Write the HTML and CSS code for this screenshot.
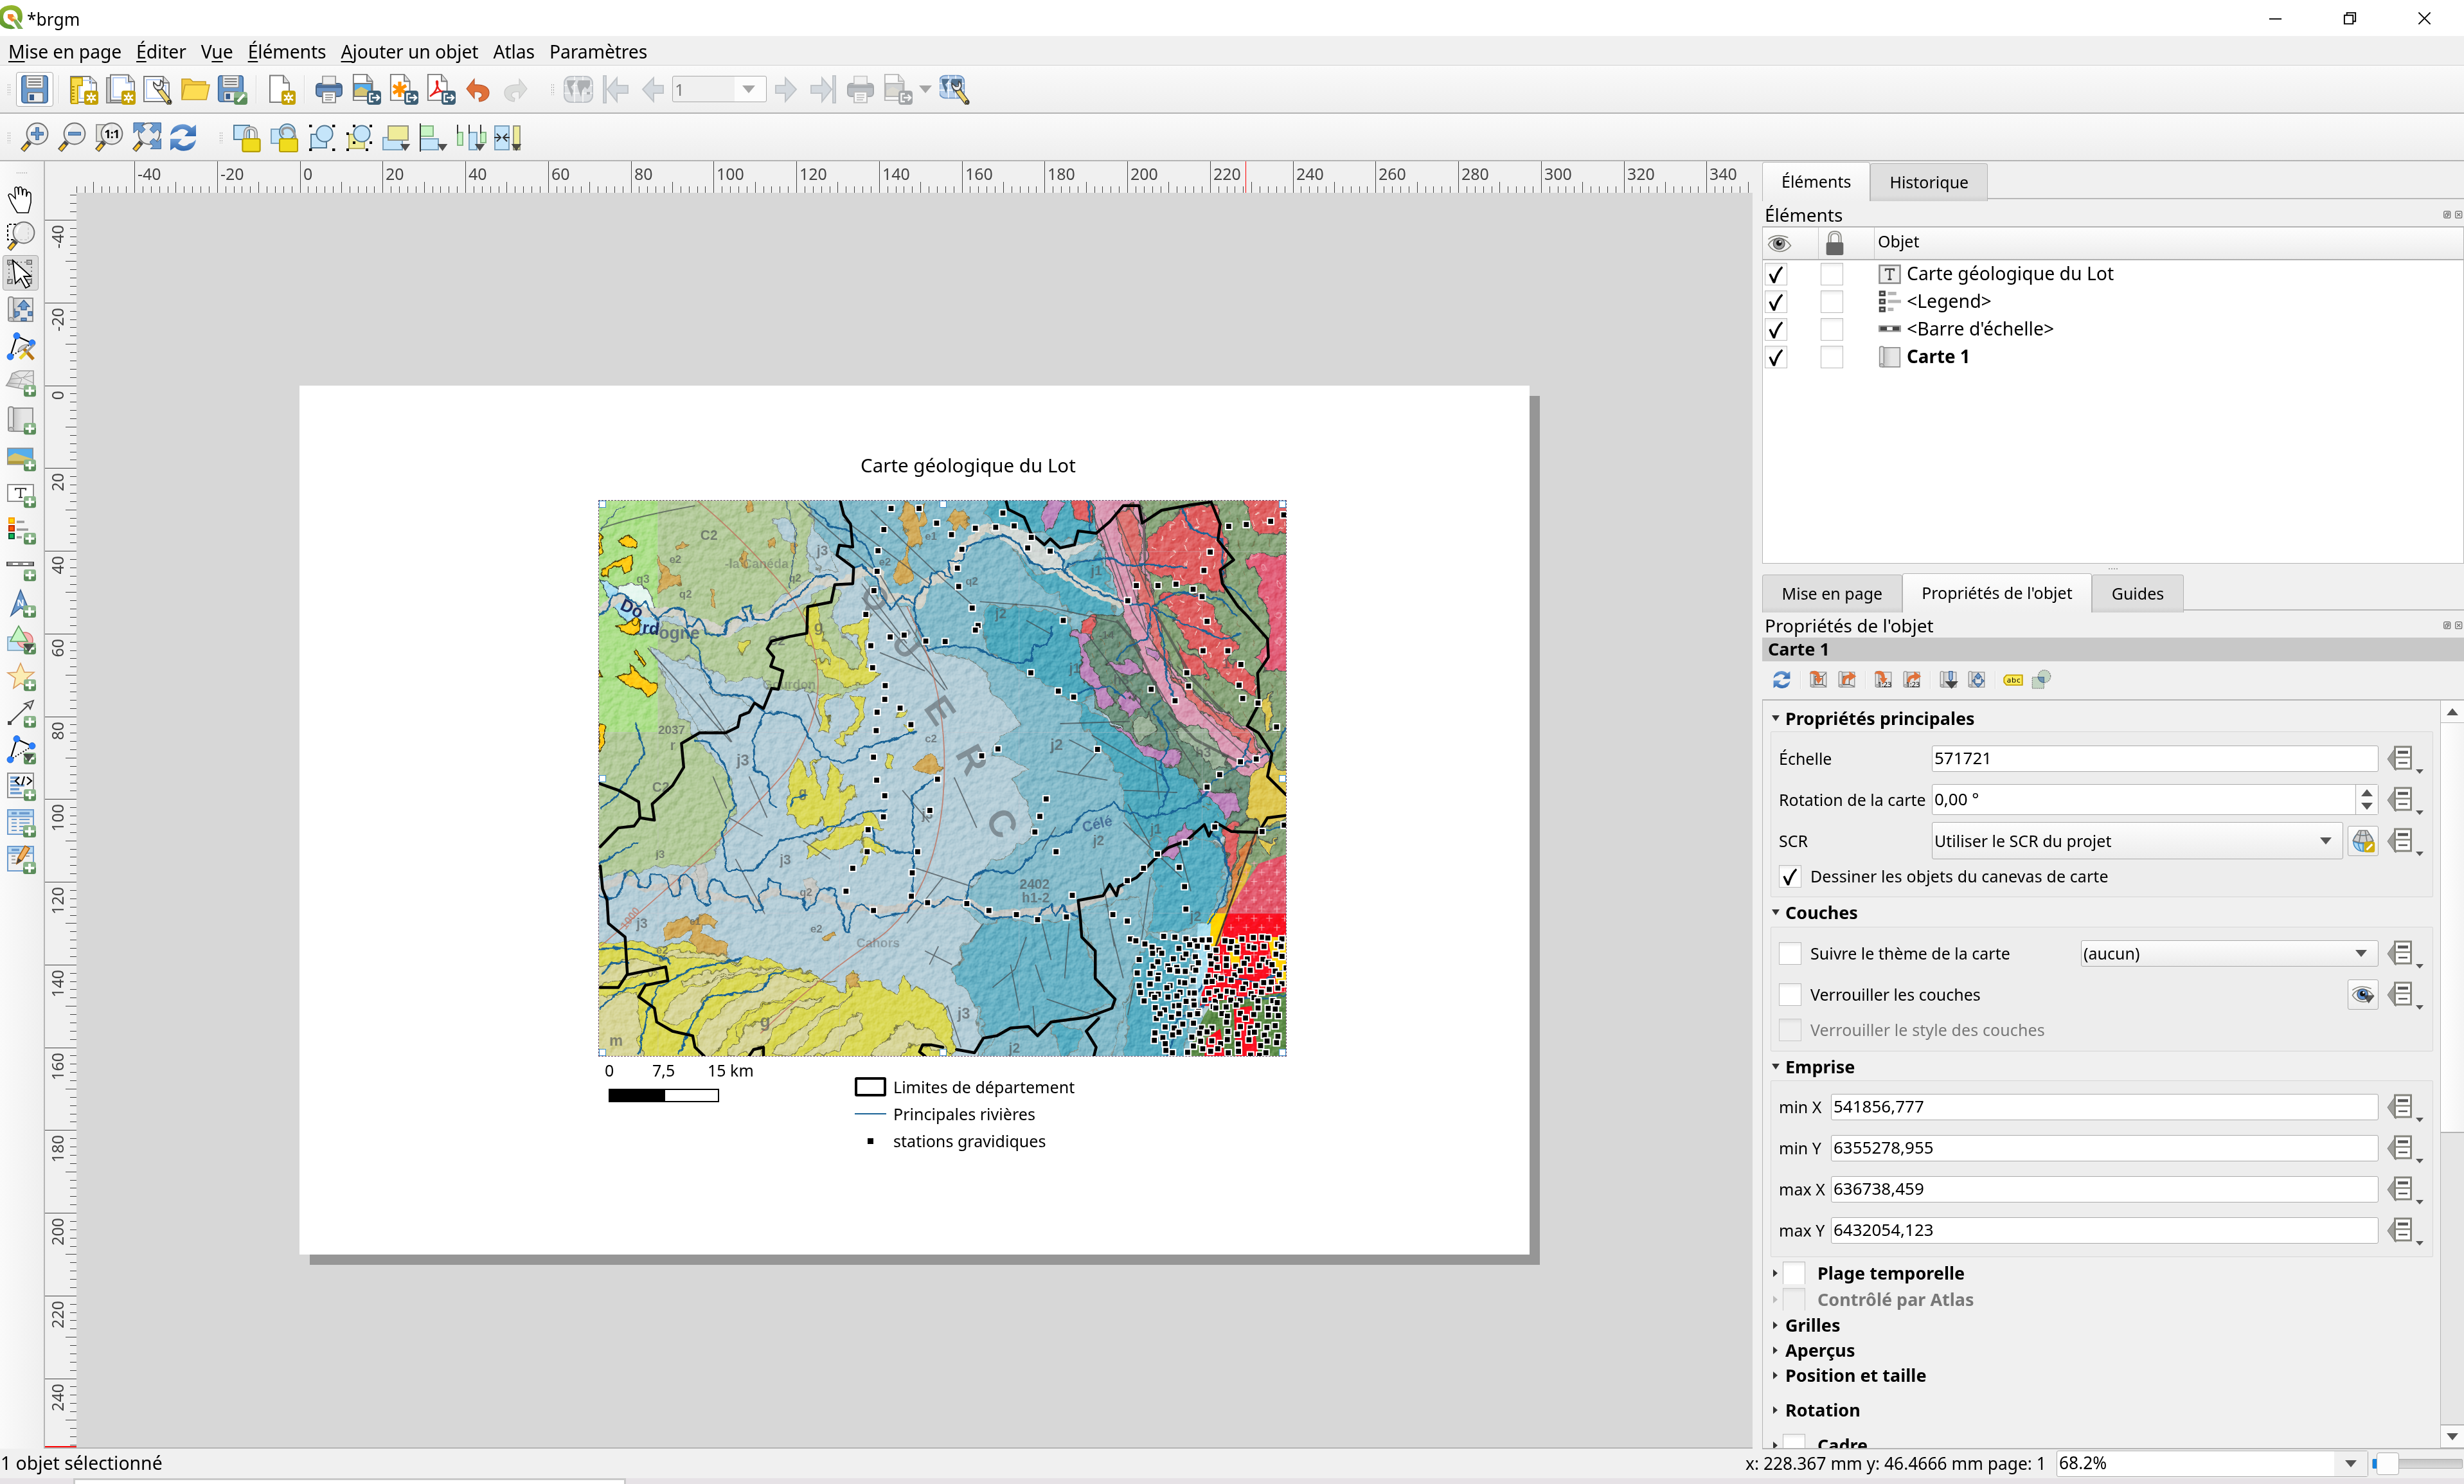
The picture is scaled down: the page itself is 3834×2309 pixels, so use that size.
FILE: index.html
```html
<!DOCTYPE html>
<html lang="fr">
<head>
<meta charset="utf-8">
<title>*brgm</title>
<link rel="stylesheet" href="styles.css">
</head>
<body>
<svg class="defs" width="0" height="0">
  <defs>
    <linearGradient id="gArrow" x1="0" y1="0" x2="0" y2="1"><stop offset="0" stop-color="#6f9fd8"/><stop offset="1" stop-color="#2d66ae"/></linearGradient>
    <linearGradient id="gRoll" x1="0" y1="0" x2="1" y2="0"><stop offset="0" stop-color="#bdbdbd"/><stop offset=".5" stop-color="#e6e6e6"/></linearGradient>
    <linearGradient id="gPlus" x1="0" y1="0" x2="0" y2="1"><stop offset=".45" stop-color="#8ab58a"/><stop offset=".46" stop-color="#5a8c5a"/></linearGradient>
    <linearGradient id="gQ" x1="0" y1="0" x2="0" y2="1"><stop offset="0" stop-color="#97b72c"/><stop offset="1" stop-color="#589632"/></linearGradient>
  </defs>
  <symbol id="plus" viewBox="0 0 9 9"><rect width="9" height="8.6" rx="1.6" fill="url(#gPlus)"/><path d="M4.500 1.200V7.400M1.200 4.300H7.800" stroke="#fff" stroke-width="1.700"/></symbol>
  <symbol id="star" viewBox="0 0 11 11"><rect width="11" height="11" rx="2" fill="#c4a000"/><path d="M5.500 1.500V9.500M2 3.500L9 7.500M9 3.500L2 7.500" stroke="#fff" stroke-width="1.300"/><circle cx="5.500" cy="5.500" r="2" fill="#fff"/><circle cx="5.500" cy="5.500" r=".9" fill="#c4a000"/></symbol>
  <symbol id="exp" viewBox="0 0 11 11"><rect width="11" height="11" rx="2.200" fill="#3d5f75"/><path d="M5 2.500H2.200V8.500H5M4 5.500H9.400M7.300 3.200L9.600 5.500L7.300 7.800" fill="none" stroke="#fff" stroke-width="1.200"/></symbol>
  <symbol id="page" viewBox="0 0 24 24"><path d="M1.500 1.500H12.500L17 7V22.500H1.500Z" fill="#fff" stroke="#797979"/><path d="M12.500 1.500V7H17" fill="#ddd" stroke="#797979"/></symbol>
  <symbol id="floppy" viewBox="0 0 24 24"><rect x="2" y="1.500" width="20" height="21" rx="2" fill="#6c9bce" stroke="#3f6a9c"/><path d="M5.500 1.500H18.500V10Q18.500 11 17.500 11H6.500Q5.500 11 5.500 10Z" fill="#eee" stroke="#888" stroke-width=".7"/><path d="M7 4H17M7 6.300H17M7 8.600H17" stroke="#555" stroke-width=".8"/><rect x="6.500" y="14.500" width="12" height="7.500" rx="1" fill="#ededed" stroke="#777" stroke-width=".7"/><rect x="8" y="16" width="3.500" height="4.500" fill="#34598a"/></symbol>
  <symbol id="glass" viewBox="0 0 24 24"><path d="M8.500 15.500L3 22" stroke="#4a4a4a" stroke-width="4"/><path d="M7 17.500L3.400 21.600" stroke="#fcc32a" stroke-width="2.200"/><circle cx="14.500" cy="9" r="8.200" fill="#eaeaea" fill-opacity=".9" stroke="#707070"/><path d="M8.500 9Q8.500 4 13 2.800Q10 6 9.500 10Z" fill="#fff"/></symbol>
  <symbol id="refresh" viewBox="0 0 24 24"><path d="M2 10.500Q3 2 11.500 1.600Q16 1.600 18.500 4.500L22 2V11H13L16 7.500Q11 3.500 7.500 7.200Q4 8 2 10.500Z" fill="url(#gArrow)"/><path d="M22 13.500Q21 22 12.500 22.400Q8 22.400 5.500 19.500L2 22V13H11L8 16.500Q13 20.500 16.500 16.800Q20 16 22 13.500Z" fill="url(#gArrow)"/></symbol>
  <symbol id="roll" viewBox="0 0 24 24"><path d="M5.500 3H21.500V21H5Z" fill="url(#gRoll)" stroke="#8f8f8f"/><path d="M2.500 20.500V3.500Q2.500 2 4.500 2Q6.500 2 6.500 3.500V18" fill="#e4e4e4" stroke="#8f8f8f"/><path d="M2.500 20Q3 17.500 5 18Q7 18.500 6.500 21H4Q2.500 21 2.500 20Z" fill="#c6c6c6" stroke="#8f8f8f" stroke-width=".8"/></symbol>
  <symbol id="wrench" viewBox="0 0 24 24"><path d="M13 12L20.500 22" stroke="#444" stroke-width="4.600" stroke-linecap="round"/><path d="M14 13.500L20.500 22" stroke="#edd36c" stroke-width="3.200" stroke-linecap="round"/><path d="M8.500 6.500Q8 10 10.500 12Q13 13 14.500 12L16 9.500Q16.500 6.500 14 5L13.500 9L11.500 9.200Z" fill="#eee" stroke="#444" stroke-width=".9"/><circle cx="20.600" cy="21.800" r="1" fill="#fff" stroke="#222"/></symbol>
  <symbol id="down" viewBox="0 0 10 7"><path d="M0 0H10L5 7Z" fill="#333" fill-opacity=".85"/></symbol>
  <symbol id="printer" viewBox="0 0 24 24"><rect x="7" y="2" width="10" height="8" fill="#eee" stroke="#888"/><rect x="2" y="7.500" width="20" height="10" rx="2.500" fill="#6c93c4" stroke="#44607f"/><path d="M2.500 8.500H21.500V11H2.500Z" fill="#4a6c97"/><rect x="7" y="1.800" width="10" height="6.500" fill="#eee" stroke="#999" stroke-width=".8"/><rect x="7" y="14" width="10" height="8.300" fill="#fff" stroke="#888"/><path d="M9 16.300H15M9 18.300H15M9 20.200H14" stroke="#888" stroke-width=".8"/></symbol>
  <symbol id="nodes" viewBox="0 0 24 24"><path d="M4 20L9 4L21 9.500" fill="none" stroke="#000" stroke-width="1.100"/><path d="M4 20L21 9.500" stroke="#000" stroke-dasharray="1 1.300"/><g fill="#2a7fff" stroke="#1f5fc0" stroke-width=".4"><circle cx="9" cy="3.800" r="2.500"/><circle cx="21" cy="9.300" r="2.500"/><circle cx="4" cy="20" r="2.500"/></g></symbol>
  <symbol id="world" viewBox="0 0 24 24"><rect x="1" y="2" width="22" height="20" rx="5" fill="#b8d0ec" stroke="#6c94c4"/><path d="M1 9H23M1 15H23M9 2V22M15.500 2V22" stroke="#fff" stroke-width=".8"/><path d="M3 5H10L7.500 9L6 10L8 13L7 18L5 13L3.500 9ZM12 5H21V9L19 12L17 10L15 13L14 18L12 12L11 8ZM18.500 14H21V16H18.500Z" fill="#51718f"/></symbol>
  <symbol id="locky" viewBox="0 0 14 20"><path d="M2.500 10V6Q2.500 1.500 6.500 1.500Q10.500 1.500 10.500 6V10" fill="none" stroke="#8a8a8a" stroke-width="2.600"/><path d="M2.500 10V6Q2.500 1.500 6.500 1.500Q10.500 1.500 10.500 6V10" fill="none" stroke="#ddd" stroke-width="1.200"/><rect x=".5" y="9.500" width="13" height="9.500" rx="1.200" fill="#f0dc1e" stroke="#b39b00"/></symbol>
  <symbol id="imgpic" viewBox="0 0 20 13"><rect x=".4" y=".4" width="19.200" height="12.200" fill="#55aeee" stroke="#8e8e8e" stroke-width=".9"/><path d="M.8 7L6 4L19.200 8.500V12.200H.8Z" fill="#d6c573"/><path d="M.8 10H19.200V12.200H.8Z" fill="#b09a3d"/></symbol>
  <symbol id="check" viewBox="0 0 24 24"><path d="M4.500 12L6.500 11L10 17.500Q13 8 18.500 3L20 4.500Q14 11 11.300 21.500H9Z" fill="#000"/></symbol>
  <symbol id="eye" viewBox="0 0 24 24"><path d="M1.500 13Q5 7 12 7Q18 7.500 22.500 14Q18 19.500 12 19.500Q5 19 1.500 13Z" fill="#f2f2f2" stroke="#83837b"/><path d="M1.500 8Q9 2 20 6.500" fill="none" stroke="#83837b"/><circle cx="11.500" cy="12" r="5.300" class="iris" stroke="#555" stroke-width=".8"/><circle cx="11.500" cy="11.500" r="2.600" fill="#111"/><circle cx="12.500" cy="10.300" r="1" fill="#fff"/></symbol>
  <symbol id="dd" viewBox="0 0 52 48"><path d="M15 5L2 23L15 41Z" fill="#a0a09c" stroke="#777"/><rect x="13.500" y="4" width="25" height="34" fill="#fdfdfd" stroke="#84847c" stroke-width="3"/><path d="M13 20.500H39" stroke="#84847c" stroke-width="2.500"/><path d="M18 12.500H34" stroke="#555" stroke-width="4.500"/><path d="M19 29H33" stroke="#555" stroke-width="2.500"/><path d="M46 39H58L52 46Z" fill="#555"/></symbol>
  <symbol id="dock" viewBox="0 0 32 12"><g fill="none" stroke="#666" stroke-width="1.200"><rect x=".7" y=".7" width="10" height="10.500" rx="2"/><rect x="18.700" y=".7" width="10" height="10.500" rx="2"/><path d="M3 5H6.500V9H3ZM5 5V3H8.500V7H7M21 3.500L26.500 8.500M26.500 3.500L21 8.500"/></g></symbol>
</svg>

<div class="window">
  <header class="titlebar">
    <svg class="logo" width="36" height="38" viewBox="0 0 36 38"><path d="M18 0Q35 1 35 18Q35 24 32 28L27 22Q28 19 27 15Q24 7 16 7.500Q5 8 5 19Q6 30 17 30.500L24 36Q20 37.500 15 37Q-3 35-3 18Q-2 1 18 0Z" fill="url(#gQ)"/><path d="M18 20L24 20L36 37H28Z" fill="#7fae58"/><path d="M12 14H20L24 22L19 26L12 20Z" fill="#f18030"/><path d="M18 20L23 17L26 23Z" fill="#ffe88c"/></svg>
    <span class="title">*brgm</span>
    <span class="winbtns">
      <svg viewBox="0 0 24 24"><path d="M2 13H22" stroke="#000" stroke-width="2"/></svg>
      <svg viewBox="0 0 24 24"><path d="M3 7H17V21H3ZM7 7V3H21V17H17" fill="none" stroke="#000" stroke-width="2"/></svg>
      <svg viewBox="0 0 24 24"><path d="M2.500 2.500L21.500 21.500M21.500 2.500L2.500 21.500" stroke="#000" stroke-width="2"/></svg>
    </span>
  </header>
  <nav class="menubar"><span><u>M</u>ise en page</span><span><u>É</u>diter</span><span>V<u>u</u>e</span><span><u>É</u>léments</span><span><u>A</u>jouter un objet</span><span>Atlas</span><span>Paramètres</span></nav>

  <div class="toolbar">
    <i class="grip"></i>
    <span class="slot framed"><svg viewBox="0 0 24 24"><use href="#floppy"/></svg></span>
    <i class="sep s1"></i>
    <span class="slot"><svg viewBox="0 0 24 24"><path d="M2 2H17L22 7V22H2Z" fill="#fff" stroke="#797979"/><path d="M17 2V7H22" fill="#ddd" stroke="#797979"/><rect x="9" y="5" width="9" height="14" fill="none" stroke="#b6cdf5"/><path d="M2.500 3H11V9H7.500V23H2.500Z" fill="#f9dc4a" stroke="#c4a000"/><path d="M3 10H5M3 12.500H5M3 15H5M3 17.500H5M3 20H5" stroke="#a68500"/><use href="#star" x="12.500" y="13" width="11" height="11"/></svg></span>
    <span class="slot"><svg viewBox="0 0 24 24"><path d="M1 3H4V22H15V22.500H1Z" fill="#ccc" stroke="#888"/><path d="M4 .8H18L22.500 6V20.500H4Z" fill="#fff" stroke="#797979"/><path d="M18 .8V6H22.500" fill="#ddd" stroke="#797979"/><path d="M6 3H16V7H20V18H6Z" fill="none" stroke="#b6cdf5"/><use href="#star" x="12.500" y="13" width="11" height="11"/></svg></span>
    <span class="slot"><svg viewBox="0 0 24 24"><path d="M1 2H16L20.500 7V21.500H1Z" fill="#fff" stroke="#797979"/><path d="M16 2V7H20.500" fill="#ddd" stroke="#797979"/><path d="M3 4.500H14V9H18V19H3Z" fill="none" stroke="#b6cdf5"/><use href="#wrench" x="0" y="0" width="24" height="24"/></svg></span>
    <span class="slot"><svg viewBox="0 0 24 24"><path d="M1.500 4H8L10 6H20V19H1.500Z" fill="#f5cb41" stroke="#c49b28" stroke-width=".8"/><path d="M4 8.500H23L20.500 20H1.500Z" fill="#fddd53" stroke="#c49b28" stroke-width=".8"/></svg></span>
    <span class="slot"><svg viewBox="0 0 24 24"><g transform="translate(-1.500 0)"><use href="#floppy" width="24" height="23"/></g><rect x="13" y="14" width="10.500" height="10" rx="2" fill="url(#gPlus)"/><path d="M16 21.500L21 16" stroke="#fff" stroke-width="2"/></svg></span>
    <i class="sep s2"></i>
    <span class="slot"><svg viewBox="0 0 24 24"><path d="M2 1.200H12.500L17 7V22H2Z" fill="#fff" stroke="#797979"/><path d="M12.500 1.200V7H17" fill="#ddd" stroke="#797979"/><use href="#star" x="11" y="13" width="11" height="11"/></svg></span>
    <i class="sep s3"></i>
    <span class="slot"><svg viewBox="0 0 24 24"><use href="#printer"/></svg></span>
    <span class="slot"><svg viewBox="0 0 24 24"><use href="#page" width="24" height="23" y="-1"/><rect x="2.500" y="7.500" width="13.500" height="10" fill="#55aeee" stroke="#777"/><path d="M3 13L8 10L15.500 14V17H3Z" fill="#d6c573"/><use href="#exp" x="12.500" y="13" width="11" height="11"/></svg></span>
    <span class="slot"><svg viewBox="0 0 24 24"><use href="#page" width="24" height="23" y="-1"/><path d="M9 6V18M4 9L14 15M14 9L4 15" stroke="#ff9000" stroke-width="2.600"/><use href="#exp" x="12.500" y="13" width="11" height="11"/></svg></span>
    <span class="slot"><svg viewBox="0 0 24 24"><use href="#page" width="24" height="23" y="-1"/><path d="M3.500 17.500Q10 13 9.500 6Q9 5 8.500 6Q9 13 15 15Q16 14 14.500 13.500Q9 13 3.500 17.500Z" fill="none" stroke="#e8201c" stroke-width="1.200"/><use href="#exp" x="12.500" y="13" width="11" height="11"/></svg></span>
    <span class="slot"><svg viewBox="0 0 24 24"><path d="M3 11.500L9 4V8.500Q20.500 8 20.500 15Q20 20.500 13 21.500L12.500 19Q16.500 17.500 14.500 15Q13 13.500 9 14V19Z" fill="#e0713a" stroke="#b4522a" stroke-width=".6"/></svg></span>
    <span class="slot off"><svg viewBox="0 0 24 24"><path d="M21 11.500L15 4V8.500Q3.500 8 3.500 15Q4 20.500 11 21.500L11.500 19Q7.500 17.500 9.500 15Q11 13.500 15 14V19Z" fill="#c6c9c6" stroke="#999" stroke-width=".6"/></svg></span>
    <i class="grip g2"></i>
    <span class="slot off gray"><svg viewBox="0 0 24 24"><use href="#world"/></svg></span>
    <span class="slot off"><svg viewBox="0 0 24 24"><path d="M2.500 1.500H4.500V22.500H2.500ZM5.500 12L13 3V9H21.500V15H13V21.500Z" fill="#b5c0cb" stroke="#8c949c"/></svg></span>
    <span class="slot off"><svg viewBox="0 0 24 24"><path d="M4 12L12.500 3V9H20V15H12.500V21.500Z" fill="#b5c0cb" stroke="#8c949c"/></svg></span>
    <span class="pagebox"><span>1</span><b></b></span>
    <span class="slot off"><svg viewBox="0 0 24 24"><path d="M20 12L11.500 3V9H4V15H11.500V21.500Z" fill="#b5c0cb" stroke="#8c949c"/></svg></span>
    <span class="slot off"><svg viewBox="0 0 24 24"><path d="M19.500 1.500H21.500V22.500H19.500ZM18.500 12L11 3V9H2.500V15H11V21.500Z" fill="#b5c0cb" stroke="#8c949c"/></svg></span>
    <span class="slot off gray"><svg viewBox="0 0 24 24"><use href="#printer"/></svg></span>
    <span class="slot off gray"><svg viewBox="0 0 24 24"><use href="#page" width="24" height="23" y="-1"/><rect x="2.500" y="7.500" width="13.500" height="10" fill="#9fb5c5" stroke="#777"/><path d="M3 13L8 10L15.500 14V17H3Z" fill="#d6c573"/><use href="#exp" x="12.500" y="13" width="11" height="11"/></svg></span>
    <svg class="menuarrow" viewBox="0 0 20 12"><path d="M0 0H20L10 12Z" fill="#a5a5a5"/></svg>
    <span class="slot"><svg viewBox="0 0 24 24"><use href="#world" x="-1" y="-.5" width="21" height="21"/><use href="#wrench" x="1.500" y="1" width="23" height="23"/></svg></span>
  </div>

  <div class="toolbar second">
    <i class="grip"></i>
    <span class="slot"><svg viewBox="0 0 24 24"><use href="#glass"/><path d="M14.500 4V14M9.500 9H19.500" stroke="#345f92" stroke-width="2.800"/><path d="M14.500 4.500V13.500M10 9H19" stroke="#6c9bce" stroke-width="1.600"/></svg></span>
    <span class="slot"><svg viewBox="0 0 24 24"><use href="#glass"/><path d="M9.500 9H19.500" stroke="#345f92" stroke-width="2.800"/><path d="M10 9H19" stroke="#6c9bce" stroke-width="1.600"/></svg></span>
    <span class="slot"><svg viewBox="0 0 24 24"><rect x="2.500" y="2" width="12" height="13" fill="#e3e3dc" stroke="#999"/><use href="#glass"/><text x="14.600" y="12.500" text-anchor="middle" class="bold" font-size="9" textLength="12">1:1</text></svg></span>
    <span class="slot"><svg viewBox="0 0 24 24"><use href="#glass"/><g fill="#6c9bce" stroke="#345f92" stroke-width=".5"><path d="M2.500 .5H11L8.700 2.700L11.500 5.700L8.500 8.700L5.500 5.700L2.500 8.500Z"/><path d="M23.700 .5H15.500L17.700 2.700L15 5.700L18 8.700L21 5.700L23.700 8.500Z"/><path d="M23.700 20.800H15.500L17.700 18.600L15 15.500L18 12.700L21 15.500L23.700 12.800Z"/></g></svg></span>
    <span class="slot"><svg viewBox="0 0 24 24"><use href="#refresh"/></svg></span>
    <i class="grip g3"></i>
    <span class="slot"><svg viewBox="0 0 24 24"><rect x="1.500" y="2.500" width="12" height="11" fill="#c5e5fa" stroke="#527d99"/><use href="#locky" x="7.500" y="3" width="15" height="21"/></svg></span>
    <span class="slot"><svg viewBox="0 0 24 24"><rect x="1.500" y="5.500" width="12" height="11" fill="#c5e5fa" stroke="#7ba0bb"/><circle cx="14" cy="7.500" r="6" fill="#c5e5fa" stroke="#527d99"/><path d="M11 10Q8.500 5 13 4.500Q19 3.500 20.500 13" fill="none" stroke="#999" stroke-width="1.800"/><rect x="8" y="13" width="14" height="10" rx="1" fill="#f0dc1e" stroke="#b39b00"/></svg></span>
    <span class="slot"><svg viewBox="0 0 24 24"><rect x="3.500" y="9.500" width="12" height="10.500" fill="#c5e5fa" stroke="#4f7590"/><circle cx="14" cy="9" r="6.300" fill="#c5e5fa" stroke="#4f7590"/><path d="M2 2h2.200v2h-2.200zM20 2h2.200v2h-2.200zM2 20.500h2.200v2h-2.200zM20 20.500h2.200v2h-2.200z"/></svg></span>
    <span class="slot"><svg viewBox="0 0 24 24"><rect x="4" y="9.500" width="12" height="11" fill="#efec97" stroke="#b5ad60"/><circle cx="14" cy="9" r="6.300" fill="#c5e5fa" stroke="#4f7590"/><path d="M7 2h2v2h-2zM20 2h2v2h-2zM2 8h2v2h-2zM20 15h2v2h-2zM7 15h2v2h-2zM2 20.500h2v2h-2zM17 20.500h2v2h-2z"/></svg></span>
    <span class="slot"><svg viewBox="0 0 24 24"><rect x="1.500" y="12" width="15" height="9.500" fill="#c5e5fa" stroke="#7ba0bb"/><rect x="5.500" y="3" width="15.500" height="11" fill="#efec9a" stroke="#929282"/><use href="#down" x="14" y="17" width="9.500" height="5.500"/></svg></span>
    <span class="slot"><svg viewBox="0 0 24 24"><rect x="1.500" y="3" width="10" height="8" fill="#c8f5c5" stroke="#84b584"/><rect x="1.500" y="13" width="14" height="8.500" fill="#c5e5fa" stroke="#7ba0bb"/><path d="M1.500 1V23" stroke="#333"/><use href="#down" x="14" y="17" width="9.500" height="5.500"/></svg></span>
    <span class="slot"><svg viewBox="0 0 24 24"><rect x="1.500" y="8" width="4" height="10" fill="#c8f5c5" stroke="#84b584"/><rect x="10.500" y="8" width="6" height="13.500" fill="#c5e5fa" stroke="#7ba0bb"/><rect x="19.500" y="8" width="4" height="8" fill="#c8f5c5" stroke="#84b584"/><path d="M1.500 2V9M10.500 2V9M19.500 2V9" stroke="#333"/><use href="#down" x="14" y="17" width="9.500" height="5.500"/></svg></span>
    <span class="slot"><svg viewBox="0 0 24 24"><rect x="1.500" y="3" width="11" height="18.500" fill="#c5e5fa" stroke="#7ba0bb"/><rect x="16" y="3" width="5" height="18.500" fill="#efec9a" stroke="#929282"/><path d="M1 12H5.500M3 9L6 12L3 15M13 12H8.500M11 9L8 12L11 15" fill="none" stroke="#333"/><use href="#down" x="13.500" y="17" width="9.500" height="5.500"/></svg></span>
  </div>

  <main class="work">
    <aside class="tools">
      <i class="grip h"></i>
      <span class="tool"><svg viewBox="0 0 24 24"><path d="M9.500 22L5 14.500L2.500 8.500Q3 6.500 5 8L8 11L7.500 3Q8.500 1 10 3L10.500 8V2.500Q12 1 13 3L13.500 8.500L14 4Q15.500 3 16.500 4.500V9.500L17.500 6Q19.500 5.500 20 7.500V14L18 22Z" fill="#fff" stroke="#000" stroke-width=".8"/></svg></span>
      <span class="tool"><svg viewBox="0 0 24 24"><path d="M12 2.500H2V14.500H18V3" fill="none" stroke="#000" stroke-dasharray="2 1.500"/><use href="#glass" width="24" height="24"/></svg></span>
      <span class="tool sel"><svg viewBox="0 0 24 24"><path d="M3 3.500H20.500V19H3Z" fill="none" stroke="#777" stroke-dasharray="1 2"/><path d="M2 2H5.500V5H2ZM17 2H20.500V5H17ZM2 17H5.500V20H2ZM17 17H20.500V20H17Z" fill="none" stroke="#777"/><path d="M6 2L20 14.500H14.500L19 22L16 23.500L12 16L8 20Z" fill="#fff" stroke="#000" stroke-width=".9"/></svg></span>
      <span class="tool"><svg viewBox="0 0 24 24"><use href="#roll"/><path d="M14.500 4.500L19 9.500H16.500V12H12.500V9.500H10ZM7.500 11V18L11 16V13.500H8M18 13.500H21V16.500H18ZM12.500 18.500H16.500V20.500H12.500Z" fill="#6c9bce" stroke="#3a5f8d" stroke-width=".7"/></svg></span>
      <span class="tool"><svg viewBox="0 0 24 24"><use href="#nodes"/><path d="M13 12L22 22" stroke="#b87412" stroke-width="2.600"/><path d="M22.500 10.500L16 17" stroke="#999" stroke-width="1.800"/><path d="M16 17L11.500 21.500" stroke="#e8d22c" stroke-width="2.600"/><path d="M10 15Q12 10.500 18 10.500Q15 14 11.500 16Z" fill="#ccc" stroke="#888" stroke-width=".6"/></svg></span>
      <span class="tool"><svg viewBox="0 0 24 24"><path d="M5.500 4.500L11 2.500H22V16L16 17L.8 14Q4 10 5.500 4.500Z" fill="url(#gRoll)" stroke="#999" stroke-width=".8"/><path d="M4 9L12 8L22 6M7 4.500L13 9L10 15.500M19 3L14 8L22 12M3 12L17 13" fill="none" stroke="#999" stroke-width=".5"/><use href="#plus" x="14.500" y="13.500" width="9.500" height="9.500"/></svg></span>
      <span class="tool"><svg viewBox="0 0 24 24"><use href="#roll"/><use href="#plus" x="14.500" y="14.500" width="9.500" height="9.500"/></svg></span>
      <span class="tool"><svg viewBox="0 0 24 24"><use href="#imgpic" x="1.500" y="5" width="20.500" height="14"/><use href="#plus" x="14.500" y="14.500" width="9.500" height="9.500"/></svg></span>
      <span class="tool"><svg viewBox="0 0 24 24"><rect x="2" y="5.500" width="20" height="13" fill="#fff" stroke="#8e8e8e"/><path d="M8 10V8.500H16V10M12 8.500V15.500M10.500 15.500H13.500" fill="none" stroke="#444" stroke-width="1.100"/><use href="#plus" x="14.500" y="14.500" width="9.500" height="9.500"/></svg></span>
      <span class="tool"><svg viewBox="0 0 24 24"><path d="M3 3H7V7H3Z" fill="#ffd400" stroke="#f79a00"/><path d="M3 9H7V13H3Z" fill="#ff5a00" stroke="#bb2a00"/><path d="M3 15H7V19H3Z" fill="#13b858" stroke="#055033"/><path d="M9 6H15M9 12H18M9 18H13" stroke="#999" stroke-width="1.700"/><use href="#plus" x="14.500" y="14.500" width="9.500" height="9.500"/></svg></span>
      <span class="tool"><svg viewBox="0 0 24 24"><rect x="1" y="8.500" width="21.500" height="3.500" fill="#444"/><path d="M2 10.200H21.500" stroke="#fff" stroke-width="1.800"/><path d="M2 10.200H6M10 10.200H14M18 10.200H21.500" stroke="#999" stroke-width="1.800"/><use href="#plus" x="14.500" y="14.500" width="9.500" height="9.500"/></svg></span>
      <span class="tool"><svg viewBox="0 0 24 24"><path d="M12 2L19.500 20L12 16L4.500 22Z" fill="#6c9bce" stroke="#3a5f8d" stroke-width=".8"/><text x="12" y="14.500" text-anchor="middle" class="bold" font-size="7" fill="#fff">N</text><use href="#plus" x="14" y="14" width="10" height="10"/></svg></span>
      <span class="tool"><svg viewBox="0 0 24 24"><rect x="2" y="10" width="14" height="10.500" fill="#c5e5fa" stroke="#7ba0bb" stroke-width=".8"/><circle cx="15.500" cy="12.500" r="6" fill="#f9b5b5" stroke="#d77070" stroke-width=".8"/><path d="M10.500 1.500L17.500 13.500H4Z" fill="#c5f7c5" stroke="#5d9a5d" stroke-width=".8"/><use href="#plus" x="14.500" y="14.500" width="9.500" height="9.500"/><use href="#down" x="13.500" y="15.500" width="9.500" height="6"/></svg></span>
      <span class="tool"><svg viewBox="0 0 24 24"><path d="M12 2L15 9L22.500 9L17 13.500L19 21L12 17.500L6.500 21.500L8 13.500L2 9.500L9 9Z" fill="#fbedb4" stroke="#d99a5e" stroke-width=".8"/><use href="#plus" x="14.500" y="14.500" width="9.500" height="9.500"/></svg></span>
      <span class="tool"><svg viewBox="0 0 24 24"><path d="M3.500 20L18 6" stroke="#444"/><path d="M2 18.500H5V21.500H2Z" fill="#444"/><path d="M15 5L22 2.500L19.500 9L18 6Z" fill="#ddd" stroke="#444" stroke-width=".9"/><use href="#plus" x="14.500" y="14.500" width="9.500" height="9.500"/></svg></span>
      <span class="tool"><svg viewBox="0 0 24 24"><use href="#nodes"/><use href="#plus" x="14.500" y="14.500" width="9.500" height="9.500"/><use href="#down" x="13.500" y="15.500" width="9.500" height="6"/></svg></span>
      <span class="tool"><svg viewBox="0 0 24 24"><rect x="2" y="2" width="20" height="19" fill="#f5f5f5" stroke="#8e8e8e"/><path d="M4 5.500H11M4 8.500H8M4 11.500H15M4 14.500H11M4 17.500H13" stroke="#6c9bce" stroke-width="1.700"/><path d="M11 5L8 8L11 11M17 5L20.500 8L17 11M15 4.500L13 11.500" fill="none" stroke="#000" stroke-width="1.100"/><use href="#plus" x="14.500" y="14.500" width="9.500" height="9.500"/></svg></span>
      <span class="tool"><svg viewBox="0 0 24 24"><rect x="2" y="2" width="20" height="19" fill="#f0f0f0" stroke="#6c9bce"/><path d="M2.500 2.500H21.500V7H2.500Z" fill="#b9d9f2"/><path d="M2 7.200H22" stroke="#6c9bce"/><path d="M5 4.700H9M11 4.700H19" stroke="#6c9bce" stroke-width="1.800"/><path d="M5 9.500H9M11 9.500H19M5 12.300H9M11 12.300H19M5 15H9M11 15H15M5 18H9M11 18H15" stroke="#6c9bce"/><use href="#plus" x="14" y="14" width="10" height="10"/></svg></span>
      <span class="tool"><svg viewBox="0 0 24 24"><rect x="2" y="2" width="20" height="19" fill="#f0f0f0" stroke="#6c9bce"/><path d="M2.500 2.500H21.500V7H2.500Z" fill="#b9d9f2"/><path d="M2 7.200H22" stroke="#6c9bce"/><path d="M5 4.700H11" stroke="#6c9bce" stroke-width="1.800"/><path d="M5 9.500H8M5 12.300H8M5 15H9M16 9.500H19" stroke="#999"/><path d="M9 15.500L10 11L15.500 1.500L19 3.500L13 13Z" fill="#f3b15f" stroke="#b1620b" stroke-width=".8"/><path d="M9 15.500L10 11L13 13Z" fill="#444"/><use href="#plus" x="14" y="14" width="10" height="10"/></svg></span>
    </aside>

    <section class="layout">
      <svg class="hruler" id="hruler" width="2657" height="49"></svg>
      <div class="below">
        <svg class="vruler" id="vruler" width="49" height="1952"></svg>
        <div class="canvas">
          <div class="sheet">
            <div class="maptitle">Carte géologique du Lot</div>
            <div class="mapitem">
<svg class="map" viewBox="17 139 1524 1210" preserveAspectRatio="none">
  <defs>
    <filter id="relief" filterUnits="userSpaceOnUse" x="17" y="139" width="1524" height="1210" color-interpolation-filters="sRGB"><feTurbulence type="fractalNoise" baseFrequency=".055" numOctaves="3" seed="8" result="n"/><feColorMatrix in="n" type="matrix" values="0 0 0 0 0 0 0 0 0 0 0 0 0 0 0 1 0 0 0 0"/><feDiffuseLighting surfaceScale="3.500" diffuseConstant="1" lighting-color="#fff"><feDistantLight azimuth="225" elevation="30"/></feDiffuseLighting></filter>
    <filter id="ragged" filterUnits="userSpaceOnUse" x="-20" y="100" width="1600" height="1290" color-interpolation-filters="sRGB"><feTurbulence type="fractalNoise" baseFrequency=".03" numOctaves="3" seed="3"/><feDisplacementMap in="SourceGraphic" scale="32" xChannelSelector="R" yChannelSelector="G"/></filter>
    <filter id="winding" filterUnits="userSpaceOnUse" x="-20" y="100" width="1600" height="1290" color-interpolation-filters="sRGB"><feTurbulence type="fractalNoise" baseFrequency=".07" numOctaves="2" seed="5"/><feDisplacementMap in="SourceGraphic" scale="11" xChannelSelector="R" yChannelSelector="G"/></filter>
    <pattern id="pp" width="62" height="58" patternUnits="userSpaceOnUse"><path d="M8 8l9 9M40 30l9-10M20 42v12M50 50h10M46 8l5 8" stroke="#f3d6cf" stroke-width="2.500"/></pattern>
    <pattern id="pc" width="54" height="62" patternUnits="userSpaceOnUse"><circle cx="14" cy="14" r="5.500" fill="none" stroke="#f2a9b6" stroke-width="2"/><circle cx="40" cy="44" r="5.500" fill="none" stroke="#f2a9b6" stroke-width="2"/></pattern>
    <pattern id="pd" width="34" height="44" patternUnits="userSpaceOnUse"><path d="M6 6l4 12M22 26l4 12" stroke="#7d6a45" stroke-width="1.500"/></pattern>
    <pattern id="px" width="34" height="40" patternUnits="userSpaceOnUse"><path d="M8 2v14M1 9h14M25 22v14M18 29h14" stroke="#f7b3bd" stroke-width="1.600"/></pattern>
  </defs>
  <rect x="17" y="139" width="1524" height="1210" fill="#b5ced8"/>
  <g stroke="#7f8a84" stroke-width="1.800" stroke-linejoin="round" filter="url(#ragged)">
    <path fill="#86bccb" d="M470 90H1140L1200 350 1140 430 1130 600 1180 740 1300 860 1420 900 1400 1060 1360 1130 1340 1390H850L862 1290 850 1230 800 1165 830 1110 865 1060 820 1020 835 985 880 940 940 900 985 855 965 790 940 745 970 722 890 690 905 652 948 632 930 590 885 555 880 520 840 480 760 470 720 440 700 370 640 352 600 300 560 262 500 230 490 180Z"/>
    <path fill="#54adc1" d="M880 90H1100L1130 210 1100 240 1000 210 930 200 870 170Z"/>
    <path fill="#54adc1" d="M930 250L990 300 1060 290 1130 250 1170 400 1165 420 1110 385 1055 375 1040 345 985 320Z"/>
    <path fill="#4faabe" d="M885 368L960 370 1060 392 1080 440 1095 470 1110 560 1080 580 1030 550 980 525 935 495 890 470 865 420Z"/>
    <path fill="#4faabe" d="M1080 570L1115 600 1210 660 1300 720 1400 770 1440 830 1390 880 1290 910 1225 870 1190 850 1175 740 1140 700 1085 620Z"/>
    <path fill="#57aec3" d="M1230 880L1330 870 1410 900 1405 960 1370 1060 1230 1090 1260 980Z"/>
    <path fill="#69b3c6" d="M865 1060L1085 1050 1090 1095 1118 1170 1160 1240 1090 1290 1020 1275 870 1310 862 1250 800 1165Z"/>
    <path fill="#57aec3" d="M1210 1090L1330 1100 1320 1390H1180L1190 1250Z"/>
    <path fill="#86bccb" d="M1090 1030L1210 1000 1230 1090 1200 1170 1175 1280 1130 1390H850L890 1300 1020 1275 1160 1240 1118 1170Z"/>
    <path fill="#57aec3" d="M1020 1275L1090 1290 1070 1349H1040Z"/>
    <path fill="#b4cb9b" d="M-20 90H468L490 190 488 240 475 290 500 305 440 340 400 370 260 430 235 395 150 385-20 340Z"/>
    <path fill="#b4cb9b" d="M225 420L300 430 400 395 480 360 530 318 552 350 530 390 560 430 600 470 610 540 560 550 545 570 480 550 390 550 380 520 300 535 262 505 245 480 190 490 145 460 148 400Z"/>
    <path fill="#b4cb9b" d="M120 440L205 620 250 670 300 730 318 800 285 890 240 935 130 940-20 970V430Z"/>
    <path fill="#b5ced8" d="M400 190L430 175 455 200 450 235 425 215ZM480 180L520 230 545 290 505 300 485 250Z"/>
  </g>
  <path d="M17 139H148V644H17Z" fill="#aee08c"/>
  <g filter="url(#winding)">
  <path d="M128 455L240 640 300 640 355 590 330 570 270 560 245 510 190 490Z" fill="#b5ced8" stroke="#7f8a84" stroke-width="1.500"/>
  <path d="M20 310L100 350 148 375V425L100 430 40 360Z" fill="#a9def3" stroke="#2d4a5a" stroke-width="2"/>
  <path d="M60 328Q110 305 135 350L145 400 60 350Z" fill="#e6f7f0" stroke="#556" stroke-width="1.500"/>
  <path fill="none" stroke="#d4d3c9" stroke-width="20" stroke-linejoin="round" d="M20 380L60 350 120 382 200 382 215 415 250 405 300 430 340 385 380 400 440 355 500 312 560 320 600 290 640 300 650 350 700 352 730 365 740 320 790 300 820 250 870 200 930 205 990 260 1100 330 1180 365"/>
  <path fill="#d3d9d6" stroke="#8a958f" d="M880 200Q930 180 975 215L1018 250 1130 225 1045 270 1060 290 1010 300 960 260Z"/>
  <path fill="none" stroke="#c9cac6" stroke-width="16" d="M20 985L70 960 120 985 200 975 245 950 260 1000 370 1010 400 990 470 1000 510 1000 550 1020 640 1030 700 1025 830 1010 880 1040 1060 1030 1180 985"/>
  <path fill="#c9cac6" stroke="#8a958f" d="M230 930L255 930 262 1000 240 1010ZM170 950L205 958 195 1010 170 985ZM470 965Q500 950 505 990L490 1020Z"/>
  </g>

  <g stroke="#7c7b45" stroke-width="1.800" stroke-linejoin="round" filter="url(#ragged)">
    <path fill="#dbd957" d="M-20 1115L90 1098 150 1110 210 1100 300 1135 400 1142 500 1175 560 1212 575 1168 640 1195 680 1215 685 1175 720 1200 750 1205 780 1250 805 1310 800 1390H-20Z"/>
    <g fill="#d8d69a"><path d="M-20 1170Q90 1120 160 1150L130 1170 17 1195ZM-20 1230L105 1205 110 1390H-20ZM150 1270Q220 1180 320 1165Q260 1200 220 1270L190 1290ZM235 1310Q310 1200 410 1180L540 1180Q440 1200 400 1230Q320 1250 270 1349H235ZM300 1349Q350 1260 480 1225L520 1225Q420 1260 360 1349ZM400 1349Q440 1290 580 1215Q500 1270 450 1349ZM480 1349Q520 1290 600 1260L600 1290Q560 1310 530 1349ZM620 1340L700 1275 760 1300 800 1349 720 1320 640 1370ZM150 1130Q260 1110 330 1145Q240 1130 160 1140ZM200 1180Q300 1150 480 1165Q300 1165 210 1195Z"/></g>
    <path fill="#dbd957" d="M380 1240Q430 1220 460 1235L400 1265Q350 1270 330 1310L320 1290Z"/>
    <path fill="#dbd957" d="M455 700L480 740 505 700 495 745 520 790 530 710 560 730 545 770 590 760 585 790 560 800 550 850 520 860 510 820 500 850 470 850 430 820 440 760Z"/>
    <path fill="#dbd957" d="M478 370L500 360 510 430 540 480 590 510 600 480 590 430 565 430 565 415 600 400 620 390 612 440 610 500 640 510 620 530 550 545 530 520 490 490 530 500 500 460 480 440ZM510 570L545 555 525 590 530 640 510 640ZM580 560L610 570 605 600 600 630 570 650 560 680 535 660 570 640 590 600ZM480 890L540 860 600 840 620 820 655 850 610 855 590 880 540 900 510 900 480 930ZM600 870L640 890 650 920 620 900 600 940ZM650 690L670 695 672 715 655 712ZM680 600l22-4-6 12-16 2ZM696 632l18-10 4 18-16 2Z"/>
    <path fill="#dbd957" d="M315 445L348 445 340 470 318 468Z"/>
  </g>
  <g fill="#d2ab5a" stroke="#8d7440" stroke-width="1.500" filter="url(#ragged)">
    <path d="M690 139L710 150 720 180 740 150 745 180 725 200 735 240 715 235 705 260 708 310 680 320 672 290 700 250 705 210 685 180ZM785 190L810 150 835 175 830 205 820 190 805 200ZM710 715L750 695 790 715 760 735 715 725Z"/>
    <path d="M155 1070L230 1045 285 1050 270 1065 250 1065 250 1085 305 1105 300 1130 240 1120 215 1095 215 1075 180 1090 160 1100ZM570 1175L600 1170 595 1200 575 1205ZM518 1085l20-6 6 12-20 6Z"/>
    <path d="M145 262L165 290 195 305 200 320 175 325 148 345 160 320 148 285ZM266 330l8 2 2 40-10-4ZM340 150l12-4 6 14-14 4ZM190 238l15-9 6 10-14 6ZM445 235l14 4-6 22-14-14ZM385 232l22-12 4 12-14 6ZM333 250l12 4-4 34-8-4Z"/>
  </g>
  <g fill="#ffcc14" stroke="#4b3c08" stroke-width="2.500" filter="url(#winding)">
    <path d="M60 225L85 215 103 230 98 243 80 238 60 232ZM22 290L60 270 90 258 88 290 72 298 68 280 40 288 38 305 22 300ZM54 412L75 408 90 400 110 400 108 425 80 432ZM55 520L90 515 85 495 105 515 120 530 148 538 140 562 125 565 110 548 85 545ZM97 462l24 32-3 6-24-32Z"/><path d="M17 210l6 5v40l-6 2ZM17 625l14 2-4 50-10 10ZM17 510l8 10-8 6Z"/><circle cx="99" cy="402" r="8"/>
  </g>

  <g stroke="#4f5950" stroke-width="2.200" stroke-linejoin="round" filter="url(#ragged)">
    <path fill="#6f937f" d="M1090 400L1180 380 1240 440 1300 560 1400 650 1490 750 1460 870 1400 900 1420 820 1320 740 1200 650 1120 590 1100 520Z"/>
    <path fill="#8aa67c" d="M1200 90H1590V1100L1440 1040 1400 900 1480 800 1470 680 1380 620 1290 500 1240 380Z"/>
    <path fill="url(#pd)" stroke="none" d="M1200 139H1541V1100L1440 1040 1400 900 1320 740 1150 600 1100 450 1240 380Z"/>
    <path fill="#e06263" d="M1235 220L1320 150 1385 150 1420 270 1400 300 1410 340 1370 330 1300 320 1230 290ZM1260 345L1360 340 1400 420 1440 450 1420 480 1470 520 1480 570 1430 540 1350 490 1310 420ZM1430 100H1590V200L1475 220ZM1060 90H1100L1110 180 1070 170ZM1300 450L1350 490 1370 530 1330 520ZM1400 860L1440 840 1420 960 1408 930ZM1085 395l40 0-15 45-20 0Z"/>
    <path fill="url(#pp)" stroke="none" d="M1235 220L1320 150 1385 150 1420 270 1400 300 1410 340 1370 330 1300 320 1230 290ZM1260 345L1360 340 1400 420 1440 450 1420 480 1470 520 1480 570 1430 540 1350 490 1310 420ZM1430 139H1541V200L1475 220Z"/>
    <path fill="#e2607a" d="M1450 260L1590 248V500L1500 510 1470 480 1510 440 1500 370 1470 350 1490 320Z"/>
    <path fill="url(#pc)" stroke="none" d="M1450 260L1541 248V500L1500 510 1470 480 1510 440 1500 370 1470 350 1490 320Z"/>
    <path fill="#db9bb5" d="M1095 90H1205L1225 180 1245 365 1275 480 1320 540 1470 650 1505 700 1500 790 1455 740 1330 650 1260 560 1200 440 1140 260Z"/>
    <path fill="#dd7370" d="M1160 170L1200 150 1240 340 1290 520 1480 670 1480 690 1320 570 1260 480 1215 350Z"/>
    <path fill="#bf88be" d="M1060 425L1110 430 1090 460 1120 520 1165 590 1130 585 1090 520 1085 470ZM1145 500L1200 490 1230 505 1180 515ZM1165 575L1190 550 1220 590 1190 615ZM1225 460L1260 465 1250 490ZM1150 625L1200 650 1240 680 1310 690 1290 720 1230 690ZM1350 770L1430 770 1440 810 1410 830ZM1000 160L1030 139H1050L1035 180 1010 210ZM1250 920L1320 840 1340 860 1290 920Z"/>
    <path fill="#9db39b" d="M1200 630L1240 600 1250 640 1220 660ZM1295 640L1350 620 1400 690 1420 720 1380 720Z"/>
    <path fill="#dfc852" d="M1460 740L1510 700 1590 780V820L1490 850 1450 820ZM1495 570L1505 560 1508 640 1492 640ZM1480 880l40-5-15 45Z"/>
    <path fill="#d98648" d="M1440 900L1490 850 1440 950 1385 1120 1370 1100Z"/>
  </g>
  <path fill="#e3b93c" d="M1350 1095L1405 1040 1448 925 1465 935 1400 1110Z"/>
  <path fill="#e35a6e" d="M1480 930L1541 910V1040H1410L1440 990Z"/>
  <path fill="#fb0f20" d="M1410 1038H1541V1240H1350L1365 1140 1395 1100Z"/>
  <path fill="url(#px)" d="M1440 930L1541 910V1240H1360L1395 1100Z"/>
  <path fill="#ffd500" d="M1352 1080L1378 1038H1412L1385 1112 1350 1105ZM1410 1090L1435 1095 1440 1160 1420 1150ZM1500 1090H1541V1200L1520 1190Z"/>
  <path fill="#a9dff0" d="M1345 1060H1375L1365 1190 1340 1240Z"/>
  <path fill="#5f8f4a" d="M1380 1230L1541 1210V1349H1320L1360 1260Z"/>
  <path fill="#fb0f20" d="M1425 1245L1465 1240 1480 1349H1430ZM1365 1310l30-20 10 59h-45Z"/>
  <path d="M1478 850L1385 1110" stroke="#4a3a30" stroke-width="4"/>

  <rect x="17" y="139" width="1524" height="1210" filter="url(#relief)" class="shade"/>

  <g fill="none" stroke="#43494d" stroke-width="2.600" opacity=".7">
    <path d="M20 200Q90 175 230 150M460 145L640 300 790 550M560 180L750 320M600 320L700 450M620 160L780 310 850 370M862 359L1010 370 1170 405M600 350L785 552M125 460L310 665M240 560L312 665M480 560L508 630M1040 625L1195 620M1110 650L1270 740M1033 728L1145 748M1060 660L1120 690 1080 735M1270 620L1350 740M640 470L740 510M965 400L1020 430M805 742L855 852M720 940L845 980M1000 900L1030 850M870 1060L840 1100M965 1090L940 1160 890 1200M930 1150L950 1250M1060 1060L1050 1180M1010 1225L1130 1265M1130 940L1160 1110M1240 960L1220 1100M1180 770L1300 775M1250 700L1260 790M1190 800L1240 890M1300 880L1330 990M350 740L390 830M270 740L300 810M305 830L380 870M780 960L700 1060M740 1120L800 1150M780 1250L790 1240 820 1330M320 920L385 1040M470 880L530 920M1170 230L1230 420M1130 180L1200 380 1320 560M1160 160L1240 350M1260 470L1400 620M1350 600L1480 720M1200 450L1290 600M980 1240L985 1300M690 770L750 840M1205 1190L1190 1260M770 1110l-20 40M985 1150l20 60M1110 160L1180 350M1190 150L1225 200 1230 330M1100 430L1230 600M1300 500L1450 640M1180 840L1310 960M1150 1060L1180 1180M1000 1060L1020 1140"/>
    <path stroke-width="6" stroke="#4b4f4d" d="M1225 165L1228 270M1165 400L1200 440 1260 560M1250 380L1330 520 1400 600M1280 600L1340 660 1460 720"/>
  </g>
  <g fill="none" stroke="#c0705c" stroke-width="2.500" opacity=".8"><path d="M235 139Q330 215 430 330Q500 420 503 530Q505 620 440 720Q320 860 20 1110M700 370Q800 560 780 790Q760 1000 640 1090Q500 1180 375 1300"/></g>
  <path d="M17 644H1541M148 139V1349M551 139V1349M949 139V1349M1355 250V900M17 1038H1541M949 250H1541" stroke="#c9c4cc" stroke-width="1" opacity=".6"/>
  <g fill="#505458" fill-opacity=".65" font-size="30" class="geo">
    <text x="242" y="224">C2</text><text x="135" y="774">C2</text><text x="392" y="454">C2</text><text x="148" y="648" font-size="27">2037</text><text x="175" y="682">r</text><text x="322" y="716" font-size="34">j3</text><text x="418" y="932">j3</text><text x="100" y="1070">j3</text><text x="812" y="1268" font-size="34">j3</text><text x="1018" y="682" font-size="34">j2</text><text x="1113" y="890">j2</text><text x="926" y="1342">j2</text><text x="1328" y="1055">j2</text><text x="896" y="396">j2</text><text x="733" y="832">j3</text><text x="500" y="258">j3</text><text x="1108" y="302">j1</text><text x="1060" y="515">j1</text><text x="1240" y="864">j1</text><text x="494" y="424" font-size="34">g</text><text x="460" y="784">g</text><text x="374" y="1286" font-size="38">g</text><text x="40" y="1326" font-size="34">m</text><text x="100" y="318" font-size="25">q3</text><text x="195" y="350" font-size="24">q2</text><text x="438" y="316" font-size="24">q2</text><text x="830" y="322" font-size="24">q2</text><text x="462" y="1000" font-size="24">q2</text><text x="173" y="275" font-size="24">e2</text><text x="638" y="280" font-size="24">e2</text><text x="486" y="1080" font-size="24">e2</text><text x="740" y="224" font-size="24">e1</text><text x="740" y="666" font-size="24">c2</text><text x="144" y="1126" font-size="24">e2</text><text x="143" y="918" font-size="24">j3</text><text x="218" y="1064" font-size="22">e1</text><text x="1158" y="540">h3</text><text x="1340" y="698">h3</text><text x="1125" y="440" font-size="24">-14</text><text x="950" y="985">2402</text><text x="955" y="1014">h1-2</text><text x="1400" y="505">17</text>
    <g fill-opacity=".4"><text x="296" y="286" font-size="28">-la Canéda</text><text x="380" y="550" font-size="28">Gourdon</text><text x="588" y="1112" font-size="28">Cahors</text></g>
    <g fill-opacity=".75" font-size="82" fill="#6f7a80"><text transform="translate(592 350) rotate(42)" font-size="74">Q</text><text transform="translate(662 450) rotate(48)" font-size="74">U</text><text transform="translate(735 590) rotate(55)">E</text><text transform="translate(806 690) rotate(62)">R</text><text transform="translate(872 830) rotate(60)">C</text></g>
    <text transform="translate(62 375) rotate(25)" fill="#14235a" fill-opacity=".95" font-size="38">Do</text><text x="112" y="428" transform="rotate(6 112 428)" fill="#14235a" fill-opacity=".95" font-size="38">rd</text><text x="150" y="440" fill="#3b4672" font-size="38">ogne</text>
    <text transform="translate(1092 862) rotate(-14)" fill="#2a4a80" font-size="32">Célé</text>
    <text transform="translate(76 1075) rotate(-52)" font-size="24" fill="#c0705c">1000</text>
  </g>

  <g fill="none" stroke="#1a6396" stroke-width="4" stroke-linejoin="round" stroke-linecap="round" filter="url(#winding)">
    <path d="M18 388L35 380 45 345 70 342 105 370 120 360 130 380 148 398 178 372 205 375 212 415 225 412 240 395 255 430 298 432 300 402 320 392 345 400 338 372 354 370 358 398 392 400 405 378 460 345 500 305 530 300 545 312"/>
    <path d="M205 415L240 470 245 505 265 530 268 550 290 562 350 565 385 600 375 625 360 650 362 725 390 740 398 800 412 808M385 602L420 600 460 610 480 650 510 695 560 710 590 700 595 680 650 665 720 642"/>
    <path d="M468 139L500 165 530 195 575 205 610 240 630 290M582 285L600 280 635 310 640 340 665 375 690 345 715 365 720 400 738 440 745 465 790 455 850 460 900 480 945 495 975 485 982 455 1010 455 1024 415"/>
    <path d="M715 365L735 325 750 330 755 295 775 295 800 310 790 270 820 270 835 240 870 225 915 213 950 235 970 270 1005 288 1045 290 1080 320 1140 345 1190 362 1235 365 1245 380"/>
    <path d="M1005 288L1050 290 1060 278 1100 270 1155 265 1180 280 1250 280 1320 285M1018 245Q1060 265 1045 290M1101 139L1108 205M1245 370L1300 338 1340 345 1400 355 1430 390M1250 375L1310 405 1400 440 1440 428M1245 372L1270 450 1275 520 1295 575M1240 375L1235 440 1190 455 1165 485M1310 155L1330 200 1400 225 1400 320 1440 345 1462 382"/>
    <path d="M98 622L118 690 90 730 70 760 55 785 20 810M230 660L262 665 300 725 318 800 290 860 300 945M20 930L60 905 102 885M1070 565L1100 550 1150 545 1185 570M1262 575L1242 590 1275 640 1280 670 1260 720 1280 760 1270 800 1250 828"/>
    <path d="M20 1000Q55 1015 68 985Q70 945 90 945Q110 965 105 980Q140 985 130 955Q165 940 180 1000Q205 1010 195 970Q195 945 220 960Q245 1035 262 1015Q250 960 285 965Q300 1000 320 1005L345 1000 365 1035 380 1030 370 1000 390 985 395 965 420 975 420 1000 470 1005 475 1030 495 1020 505 985 540 985 545 1020 560 1045Q555 1075 572 1078Q575 1020 600 1018L640 1048 700 1035 720 1010 760 1025 790 1005 830 1008 850 1025 880 1050 950 1045 990 1048 1000 1030 1020 1020 1030 1045 1045 1020 1060 1040 1080 1045"/>
    <path d="M300 945L360 945 420 880 500 862 560 840 600 820 655 812M712 1000L715 930 712 780 768 740M624 850L630 885 680 905 725 905M830 1010L840 965 870 945 940 950 980 910 995 880 1060 860 1090 820 1140 810 1160 795 1170 812 1230 828 1280 820 1350 795 1380 750 1430 720 1480 700 1510 690 1541 635M1440 710L1465 655M440 808L450 788 478 780"/>
    <path d="M20 1245L60 1210 120 1190M50 1112L120 1120 178 1145M105 1345L125 1250 150 1200 220 1160 330 1138M195 1345L225 1275 260 1220 380 1205 400 1170 432 1165M25 1170L45 1145 80 1145M17 1115H60M1375 860L1400 890 1415 950 1400 1010 1370 1060M1490 860L1541 845M1320 1240L1360 1190 1400 1175 1480 1190 1541 1158M1280 1349L1300 1270 1350 1245 1400 1215 1480 1225 1541 1215"/>
    <path stroke-width="2" stroke="#3b5d82" d="M17 210L35 185 55 160 75 150M430 139L455 215 440 330"/>
  </g>
  <g fill="none" stroke="#000" stroke-width="6.300" stroke-linejoin="round" stroke-linecap="round">
    <path d="M552 139L560 170 575 190 580 240 550 236 545 258 582 285 580 320 540 322 532 360 480 370 478 428 440 435 400 445 390 462 405 480 398 500 425 510 415 550 400 548 382 592 362 580 350 600 330 608 325 632 298 645 240 645 200 668 205 720 180 760 135 800 140 835 108 830"/>
    <path d="M17 755L60 770 105 795 108 830 95 848 60 852 20 893"/>
    <path d="M920 139L925 158 960 175 975 210 1005 235 1018 222 1040 242 1072 235 1080 205 1120 210 1150 185 1180 150 1215 150 1222 188 1265 160 1330 148 1375 142M1375 142L1395 190 1390 225 1425 268 1395 290 1400 320 1435 370 1455 390 1500 440 1502 480 1478 515 1482 580 1455 630 1480 645 1510 690 1500 740 1541 780"/>
    <path d="M1541 825L1500 830 1480 862 1420 860 1385 840 1370 870 1360 845 1320 880 1280 895 1250 920 1210 960 1170 980 1165 1000 1150 975 1135 1000 1080 1010 1085 1050 1088 1090 1118 1120 1118 1180 1162 1225 1155 1245 1100 1265 1060 1270 1020 1275 990 1305 970 1285 930 1288 900 1305 870 1310 850 1342 810 1335"/>
    <path d="M1125 1268L1098 1295 1120 1330 1115 1349M780 1330L755 1325 735 1325 728 1340 740 1349M20 935L25 985 35 1010 38 1060 75 1090 80 1170 60 1200 20 1200M80 1172L165 1155 170 1185 120 1195 105 1220 140 1245 145 1275 180 1295 225 1305 230 1330 250 1349M350 1349L360 1335 382 1330 382 1349"/>
  </g>
  <g id="stations"></g>
</svg>
              <i class="hd tl"></i><i class="hd tc"></i><i class="hd tr"></i><i class="hd ml"></i><i class="hd mr"></i><i class="hd bl"></i><i class="hd bc"></i><i class="hd br"></i>
            </div>
            <div class="mapfoot">
              <div class="scale">
                <div class="scalelabels"><span>0</span><span>7,5</span><span>15 km</span></div>
                <div class="bar"><i></i></div>
              </div>
              <ul class="legend">
                <li><b class="k box"></b>Limites de département</li>
                <li><b class="k line"></b>Principales rivières</li>
                <li><b class="k dot"></b>stations gravidiques</li>
              </ul>
            </div>
          </div>
        </div>
      </div>
    </section>

    <section class="panel">
      <div class="tabs"><span class="tab on">Éléments</span><span class="tab">Historique</span></div>
      <div class="docktitle">Éléments<svg width="32" height="12" viewBox="0 0 32 12"><use href="#dock"/></svg></div>
      <div class="tree">
        <div class="thead"><span class="c1"><svg class="grayeye" viewBox="0 0 24 24"><use href="#eye"/></svg></span><span class="c1"><svg class="lk" viewBox="0 0 24 30"><path d="M6 14V8Q6 2 12 2Q18 2 18 8V14" fill="none" stroke="#8b8b85" stroke-width="4"/><path d="M6 14V8Q6 2 12 2Q18 2 18 8V14" fill="none" stroke="#e8e8e8" stroke-width="1.500"/><rect x="2" y="13.500" width="20" height="15" rx="2" fill="#666"/></svg></span><span class="c3">Objet</span></div>
        <div class="trow"><i class="cb"><svg viewBox="0 0 24 24"><use href="#check"/></svg></i><i class="cb two"></i><svg class="ti" viewBox="0 0 24 24"><rect x="1" y="3" width="22" height="19" fill="#eee" stroke="#8e8e8e" stroke-width="1.800"/><path d="M7.500 9V7H16.500V9M12 7V18M10 18H14" fill="none" stroke="#444" stroke-width="1.600"/></svg><span>Carte géologique du Lot</span></div>
        <div class="trow"><i class="cb"><svg viewBox="0 0 24 24"><use href="#check"/></svg></i><i class="cb two"></i><svg class="ti" viewBox="0 0 24 24"><path d="M1.500 1.500H6.500V5.500H1.500ZM1.500 10H6.500V14H1.500ZM1.500 18.500H6.500V22.500H1.500Z" fill="#ccc" stroke="#444" stroke-width="2"/><path d="M10 3.500H19M10 12H24M10 20.500H16" stroke="#b5b5b5" stroke-width="3.500"/></svg><span>&lt;Legend&gt;</span></div>
        <div class="trow"><i class="cb"><svg viewBox="0 0 24 24"><use href="#check"/></svg></i><i class="cb two"></i><svg class="ti" viewBox="0 0 24 24"><path d="M0 11.500H24" stroke="#999" stroke-width="7"/><path d="M2 11.500H22" stroke="#444" stroke-width="4"/><path d="M9 11.500H15" stroke="#fff" stroke-width="3.500"/></svg><span>&lt;Barre d'échelle&gt;</span></div>
        <div class="trow"><i class="cb"><svg viewBox="0 0 24 24"><use href="#check"/></svg></i><i class="cb two"></i><svg class="ti" viewBox="1.500 1 21 21"><use href="#roll" width="24" height="24"/></svg><span class="bold c1name">Carte 1</span></div>
      </div>
      <div class="split"><i></i></div>
      <div class="tabs t2"><span class="tab">Mise en page</span><span class="tab on">Propriétés de l'objet</span><span class="tab">Guides</span></div>
      <div class="docktitle d2">Propriétés de l'objet<svg width="32" height="12" viewBox="0 0 32 12"><use href="#dock"/></svg></div>
      <div class="objname">Carte 1</div>
      <div class="minibar">
        <svg viewBox="0 0 24 24"><use href="#refresh"/></svg><i></i>
        <svg viewBox="0 0 24 24"><use href="#roll"/><path d="M8 8H17V18H8ZM17 8L21 4M17 18L21 20" fill="none" stroke="#555"/><path d="M1 5Q6-1 12 3Q14 6 14 10H17L12 17L7.500 10H10Q10 4 1 5Z" fill="#e0713a"/></svg>
        <svg viewBox="0 0 24 24"><use href="#roll"/><path d="M8 8H15V18H8ZM15 18L21 20" fill="none" stroke="#555"/><path d="M7 17Q6 7 15 6V2L23.500 8L15 13.500V10Q10 10 10 17Z" fill="#e0713a"/></svg><i></i>
        <svg viewBox="0 0 24 24"><use href="#roll"/><text x="5" y="21" font-size="9" textLength="17">1:23</text><path d="M1 5Q6-1 12 3Q14 6 14 10H17L12 17L7.500 10H10Q10 4 1 5Z" fill="#e0713a"/></svg>
        <svg viewBox="0 0 24 24"><use href="#roll"/><text x="5" y="21" font-size="9" textLength="17">1:23</text><path d="M7 15Q6 7 15 6V2L23.500 8L15 13.500V10Q10 10 10 15Z" fill="#e0713a"/></svg><i></i>
        <svg viewBox="0 0 24 24"><use href="#roll"/><path d="M13 2H17V11L15 14L13 11Z" fill="#9bbbe3" stroke="#34598a"/><path d="M8 14H24L16 23Z" fill="#444"/></svg>
        <svg viewBox="0 0 24 24"><use href="#roll"/><path d="M14 4L18 9H15.500V11H12.500V9H10ZM14 21L18 17H10ZM7 13.500L10 11V16ZM21 13.500L18 11V16Z" fill="#6c9bce" stroke="#3a5f8d"/></svg><i></i>
        <svg viewBox="0 0 24 24"><path d="M4 6.500H23V18.500H4L1 15V10Z" fill="#fdec5a" stroke="#c4a000" stroke-width="1.500"/><text x="4.500" y="15.500" font-size="9" textLength="16">abc</text></svg>
        <svg viewBox="0 0 24 24"><rect x="1" y="9" width="14" height="13.500" fill="#c3d5c3" stroke="#777" stroke-dasharray="1.500 1"/><circle cx="15.500" cy="8" r="7.500" fill="#c3d5c3" stroke="#777" stroke-dasharray="1.500 1"/><path d="M8 9H15V15.500Q9 15 8 9Z" fill="#7195b5" stroke="#4d708f"/></svg>
      </div>
      <div class="scroll">
        <div class="props">
          <h3 class="h1">Propriétés principales</h3>
          <div class="group p1">
            <div class="row"><label class="w1">Échelle</label><span class="inp">571721</span><svg class="dd"><use href="#dd"/></svg></div>
            <div class="row"><label class="w1">Rotation de la carte</label><span class="inp tall">0,00 °<em class="spin"><b class="u"></b><b class="d"></b></em></span><svg class="dd"><use href="#dd"/></svg></div>
            <div class="row"><label class="w1">SCR</label><span class="combo big">Utiliser le SCR du projet<b class="d"></b></span><span class="btn"><svg viewBox="0 0 24 24"><circle cx="12" cy="13" r="9.500" fill="#a8d8f5" stroke="#3f8ac4"/><path d="M2.500 13Q12 17 21.500 13M12 13V22.500M7 14Q8 20 10 22" fill="none" stroke="#3f8ac4"/><path d="M8 2H16L22 12Q12 16 2 12ZM6 6Q12 8 18 6M10 2L8 14M14 2L16 14" fill="#d0d0d0" stroke="#777"/><rect x="13" y="13" width="10.500" height="10.500" rx="2" fill="#d0ad10"/><path d="M15.500 21L21 15.500" stroke="#fff" stroke-width="2"/></svg></span><svg class="dd"><use href="#dd"/></svg></div>
            <div class="row chk"><i class="cb"><svg viewBox="0 0 24 24"><use href="#check"/></svg></i><label>Dessiner les objets du canevas de carte</label></div>
          </div>
          <h3 class="h2">Couches</h3>
          <div class="group p2">
            <div class="row"><i class="cb"></i><label class="w2">Suivre le thème de la carte</label><span class="combo">(aucun)<b class="d"></b></span><svg class="dd"><use href="#dd"/></svg></div>
            <div class="row"><i class="cb"></i><label class="grow">Verrouiller les couches</label><span class="btn"><svg viewBox="0 0 24 24" class="blueeye"><use href="#eye"/><path d="M12 13H23L17.500 21Z" fill="#333" fill-opacity=".8"/></svg></span><svg class="dd"><use href="#dd"/></svg></div>
            <div class="row r3"><i class="cb dis"></i><label class="dim">Verrouiller le style des couches</label></div>
          </div>
          <h3 class="h4">Emprise</h3>
          <div class="group p3">
            <div class="row"><label class="w3">min X</label><span class="inp">541856,777</span><svg class="dd"><use href="#dd"/></svg></div>
            <div class="row"><label class="w3">min Y</label><span class="inp">6355278,955</span><svg class="dd"><use href="#dd"/></svg></div>
            <div class="row"><label class="w3">max X</label><span class="inp">636738,459</span><svg class="dd"><use href="#dd"/></svg></div>
            <div class="row"><label class="w3">max Y</label><span class="inp">6432054,123</span><svg class="dd"><use href="#dd"/></svg></div>
          </div>
          <div class="closed">
            <h4 class="hc"><i class="cb"></i>Plage temporelle</h4>
            <h4 class="hc dim"><i class="cb dis"></i>Contrôlé par Atlas</h4>
            <h4>Grilles</h4><h4>Aperçus</h4><h4>Position et taille</h4><h4 class="far">Rotation</h4><h4 class="hc far2"><i class="cb"></i>Cadre</h4>
          </div>
        </div>
        <div class="sbar"><span class="sb"><b class="u"></b></span><span class="thumb"></span><span class="track"></span><span class="sb"><b class="d"></b></span></div>
      </div>
    </section>
  </main>

  <footer class="status">
    <span class="msg">1 objet sélectionné</span>
    <span class="coords">x: 228.367 mm y: 46.4666 mm page: 1</span>
    <span class="zoombox">68.2%<em><b class="d"></b></em></span>
    <span class="slider"><i class="fill"></i><i class="knob"></i></span>
  </footer>
  <div class="behind"><span></span></div>
</div>
<script src="script.js"></script>
</body>
</html>
```
FILE: styles.css
```css
* { box-sizing: border-box; }
body { margin: 0; background: #f0f0f0; font-family: "Noto Sans", "Open Sans", sans-serif; font-size: 25px; color: #000; overflow: hidden; }
i, em { font-style: normal; }
h3, h4, ul { margin: 0; padding: 0; }
svg { display: block; flex: none; }
svg text { font-family: "Noto Sans", sans-serif; }
svg .bold, .bold { font-weight: 700; }
.defs { position: absolute; }
.window { width: 3834px; height: 2309px; display: flex; flex-direction: column; overflow: hidden; }

.titlebar { height: 56px; background: #fff; display: flex; align-items: center; flex: none; }
.logo { margin-top: -2px; }
.title { font-size: 26.4px; margin-left: 6px; margin-top: 4px; }
.winbtns { margin-left: auto; display: flex; gap: 93px; padding-right: 50px; }
.winbtns svg { width: 23px; height: 23px; }

.menubar { height: 46px; display: flex; align-items: center; gap: 23px; padding-left: 13px; font-size: 28.4px; letter-spacing: -.15px; border-bottom: 1px solid #d2d2d2; flex: none; padding-top: 2px; }
.menubar u { text-decoration-thickness: 2px; text-underline-offset: 4px; }

.toolbar { height: 75px; display: flex; align-items: center; flex: none; background: linear-gradient(#fafafa, #eee); border-bottom: 2px solid #b4b4b4; }
.toolbar.second { height: 74px; padding-top: 1px; }
.toolbar .slot { width: 58px; display: flex; justify-content: center; flex: none; }
.toolbar .slot svg { width: 48px; height: 48px; }
.second .slot svg { margin-left: -2px; }
.toolbar .framed { height: 54px; align-items: center; border: 1px solid #aaa; border-radius: 4px; background: #fdfdfd; }
.toolbar .off { opacity: .5; }
.toolbar .gray { filter: grayscale(.8); }
.grip { width: 5px; height: 18px; margin: 0 9px 0 11px; flex: none; background: radial-gradient(#a5a5a5 35%, transparent 45%) 0 0 / 3px 4px; }
.grip.g2 { margin: 0 9px 0 26px; }
.grip.g3 { margin: 0 11px 0 26px; }
.grip.h { width: 17px; height: 5px; margin: 16px auto 10px 25px; display: block; }
.sep { width: 2px; height: 44px; background: #d6d6d6; border-right: 1px solid #fff; flex: none; }
.s1 { margin: 0 8px 0 8px; }
.s2 { margin: 0 11px 0 7px; }
.s3 { margin: 0 8px 0 4px; }
.pagebox { width: 147px; height: 41px; margin: 0 1px 0 1px; border: 1.5px solid #a8a8a8; border-radius: 3px; background: linear-gradient(90deg, #f0f0f0 66%, #fcfcfc 66%); display: flex; align-items: center; justify-content: space-between; padding: 0 17px 0 3px; color: #777; font-size: 26px; }
.pagebox b { border: 10px solid transparent; border-top: 12px solid #a5a5a5; border-bottom: 0; }
.menuarrow { width: 20px; height: 12px; margin: 0 7px 0 4px; }

.work { height: 2003px; display: flex; flex: none; }
.tools { width: 70px; border-right: 2px solid #b4b4b4; background: linear-gradient(90deg, #fafafa, #efefef); flex: none; }
.tool { width: 56px; height: 57px; margin-left: 4px; display: flex; align-items: center; justify-content: center; }
.tool svg { width: 48px; height: 48px; }
.tool.sel { background: #dcdcdc; border: 1px solid #a6a6a6; border-radius: 4px; height: 55px; margin-top: 1px; margin-bottom: 1px; }

.layout { width: 2657px; flex: none; display: flex; flex-direction: column; background: #f0f0f0; border-bottom: 2px solid #b4b4b4; }
.below { display: flex; flex: 1; min-height: 0; }
.hruler text, .vruler text { font-size: 25px; fill: #444; }
.canvas { flex: 1; background: #d7d7d7; position: relative; overflow: hidden; }
.sheet { position: absolute; left: 347px; top: 300px; width: 1914px; height: 1352px; background: #fff; box-shadow: 16px 16px 0 #969696; padding: 0 378px 0 466px; }
.maptitle { height: 179px; padding-top: 104px; padding-left: 407px; font-size: 29.5px; line-height: 40px; white-space: nowrap; }
.mapitem { position: relative; width: 1069px; height: 864px; outline: 1px dashed #6a4a6a; }
.map { width: 1069px; height: 864px; overflow: hidden; }
.shade { mix-blend-mode: soft-light; opacity: .55; }
.geo text, .geo { font-family: "Liberation Sans", sans-serif; font-weight: 700; }
.hd { position: absolute; width: 11px; height: 11px; background: #fff; border: 1px solid #3a8fd0; }
.tl, .ml, .bl { left: 0; } .tr, .mr, .br { right: 0; } .tc, .bc { left: 530px; }
.tl, .tc, .tr { top: 0; } .bl, .bc, .br { bottom: 0; } .ml, .mr { top: 427px; }
.mapfoot { display: flex; width: 1070px; }
.scale { width: 382px; padding-left: 15px; padding-top: 5px; }
.scalelabels { display: flex; font-size: 25px; line-height: 34px; }
.scalelabels span:nth-child(1) { width: 68px; margin-left: -7px; padding-left: 1px; }
.scalelabels span:nth-child(2) { width: 89px; padding-left: 7px; }
.scalelabels span:nth-child(3) { margin-left: 4px; }
.bar { width: 172px; height: 21px; border: 2px solid #000; margin-top: 12px; }
.bar i { display: block; width: 86px; height: 17px; background: #000; }
.legend { list-style: none; padding: 27px 0 0 16px; font-size: 25.1px; }
.legend li { display: flex; align-items: center; height: 42px; white-space: nowrap; }
.k { margin-right: 11px; width: 49px; flex: none; }
.box { height: 30px; border: 4px solid #000; border-radius: 3px; }
.line { height: 2px; background: #1a6396; }
.dot { height: 9px; background: #000; width: 9px; margin: 0 31px 0 20px; }

.panel { flex: 1; margin-left: 15px; min-width: 0; }
.tabs { display: flex; height: 62px; align-items: flex-end; position: relative; }
.tabs::after { content: ""; flex: 1; border-top: 2px solid #b8b8b8; height: 3px; }
.tab { height: 59px; padding: 0 29px; line-height: 57px; background: linear-gradient(#dfdfdf 85%, #d0d0d0); border: 1px solid #b4b4b4; border-bottom: 0; border-radius: 4px 4px 0 0; white-space: nowrap; }
.tab.on { height: 61px; line-height: 59px; background: linear-gradient(#fdfdfd, #f0f0f0); }
.t2 .tab { padding: 0 29.5px; }
.docktitle { height: 39px; font-size: 28px; line-height: 39px; padding: 3px 0 0 4px; display: flex; justify-content: space-between; align-items: center; }
.docktitle svg { margin-top: -1px; }
.docktitle.d2 { padding-top: 1px; }
.tree { height: 525px; border: 1px solid #b4b4b4; border-top: 2px solid #b4b4b4; background: #fff; }
.thead { height: 51px; display: flex; background: linear-gradient(#fdfdfd, #ececec); border-bottom: 2px solid #b0b0b0; }
.c1 { width: 87px; border-right: 1px solid #c6c6c6; display: flex; align-items: center; padding-left: 6px; }
.c1 svg { width: 40px; height: 40px; }
.c1 .lk { width: 38px; }
.c3 { padding-left: 5px; line-height: 43px; }
.grayeye .iris, .grayeye { fill: #999; }
.blueeye { fill: #5b8ed0; }
.trow { height: 43px; display: flex; align-items: center; padding-left: 3px; font-size: 28.4px; }
.cb { width: 35px; height: 35px; border: 1px solid #b9b9b9; background: linear-gradient(#ededed, #fff 20%); flex: none; display: block; }
.cb svg { width: 34px; height: 34px; margin-left: -1px; }
.cb.two { margin-left: 52px; margin-right: 55px; }
.cb.dis { background: linear-gradient(#e0e0e0, #efefef 20%); border-color: #c6c6c6; }
.ti { width: 35px; height: 36px; margin-right: 9px; margin-top: -1px; }
.trow span { margin-top: -3px; white-space: nowrap; }
.c1name { font-size: 27.8px; }
.split { height: 14px; display: flex; justify-content: center; padding-top: 6px; }
.split i { width: 17px; height: 4px; background: radial-gradient(#a5a5a5 35%, transparent 45%) 0 0 / 4px 4px; }
.objname { height: 37px; background: #c8c8c8; font-weight: 700; font-size: 27px; line-height: 36px; padding-left: 9px; }
.minibar { height: 59px; display: flex; align-items: center; padding-left: 15px; padding-bottom: 2px; }
.minibar svg { width: 31px; height: 31px; margin-right: 13px; }
.minibar i { width: 2px; height: 28px; background: #d8d8d8; border-right: 1px solid #fff; margin: 0 11px 0 0; }
.scroll { height: 1167px; border-top: 2px solid #b4b4b4; border-left: 1px solid #b4b4b4; border-bottom: 2px solid #b4b4b4; display: flex; overflow: hidden; }
.props { flex: 1; padding: 0 11px 0 12px; height: 1163px; overflow: hidden; }
h3, h4 { font-size: 27px; white-space: nowrap; }
h3 { display: flex; align-items: center; padding-left: 2px; }
h3::before { content: ""; border: 6px solid transparent; border-top: 9px solid #333; border-bottom: 0; margin-right: 9px; }
.h1 { height: 48px; padding-top: 6px; }
.h2 { height: 46px; padding-top: 1px; }
.h4 { height: 45px; padding-top: 2px; }
.group { border: 1px solid #d6d6d6; background: #ededed; padding: 8px 0 0 12px; border-radius: 2px; }
.p1 { height: 258px; } .p2 { height: 194px; } .p3 { height: 275px; }
.p1 { padding-top: 9px; }
.row { height: 64px; display: flex; align-items: center; white-space: nowrap; }
.row.chk { height: 46px; }
.row .cb + label { padding-left: 14px; }
.w1 { width: 238px; flex: none; }
.w2 { width: 435px; flex: none; }
.w3 { width: 81px; flex: none; }
.grow { flex: 1; }
.row label.dim, .chk label { letter-spacing: .1px; }
.inp, .combo { flex: 1; height: 41px; border: 1.5px solid #aaa; border-radius: 3px; background: #fff; padding-left: 3px; line-height: 36px; font-size: 26px; display: flex; justify-content: space-between; }
.inp.tall { height: 48px; line-height: 44px; }
.combo { background: linear-gradient(#fdfdfd, #ececec); font-size: 25px; align-items: center; padding-right: 17px; }
.combo.big { height: 58px; }
.spin { width: 35px; border-left: 1px solid #aaa; display: flex; flex-direction: column; align-items: center; justify-content: center; gap: 10px; background: #fafafa; }
b.u { border: 9px solid transparent; border-bottom: 11px solid #555; border-top: 0; }
b.d { border: 9px solid transparent; border-top: 11px solid #555; border-bottom: 0; }
.btn { width: 48px; height: 47px; margin-left: 7px; border: 1px solid #aaa; border-radius: 3px; background: linear-gradient(#fdfdfd, #ececec); display: flex; align-items: center; justify-content: center; }
.btn svg { width: 38px; height: 38px; }
.dd { width: 60px; height: 48px; margin: 4px 16px 0 8px; overflow: visible; }
.dd use { width: 52px; height: 48px; overflow: visible; }
#dd { overflow: visible; }
.row.r3 { height: 46px; }
.dim { color: #787878; }
.closed { padding-top: 4px; }
h4 { height: 39px; display: flex; align-items: center; padding-left: 4px; }
h4::before { content: ""; border: 6px solid transparent; border-left: 7px solid #333; border-right: 0; margin-right: 12px; }
h4.hc { height: 41px; }
h4.hc::before { margin-right: 8px; }
h4.dim::before { border-left-color: #bbb; }
h4 .cb { margin-right: 19px; border-bottom: 0; }
h4.far { margin-top: 15px; }
h4.far2 { margin-top: 15px; }
.sbar { width: 37px; border-left: 1px solid #b4b4b4; display: flex; flex-direction: column; flex: none; }
.sb { height: 35px; display: flex; align-items: center; justify-content: center; background: #fafafa; border-bottom: 1px solid #b4b4b4; }
.thumb { height: 638px; background: linear-gradient(90deg, #fff, #f4f4f4); border-bottom: 2px solid #b4b4b4; }
.track { flex: 1; background: #e6e6e6; border-bottom: 2px solid #b4b4b4; }

.status { height: 46px; display: flex; align-items: center; flex: none; }
.msg { font-size: 28.4px; margin-left: 1px; flex: 1; margin-top: -2px; }
.coords { font-size: 26.4px; width: 484px; white-space: nowrap; }
.zoombox { width: 485px; height: 41px; border: 1.5px solid #aaa; border-radius: 3px; background: #fff; font-size: 26.4px; line-height: 37px; padding-left: 3px; display: flex; justify-content: space-between; }
.zoombox em { width: 52px; background: #f0f0f0; display: flex; align-items: center; justify-content: center; }
.slider { width: 141px; height: 15px; margin-left: 6px; margin-right: 2px; border: 1px solid #aaa; background: linear-gradient(#c4c4c4, #dcdcdc); display: flex; align-items: center; border-radius: 2px; }
.slider .fill { width: 6px; height: 15px; background: #1583e0; flex: none; }
.slider .knob { width: 35px; height: 35px; background: #fdfdfd; border: 1px solid #aaa; border-radius: 4px; flex: none; }
.behind { height: 9px; background: #e6e2e6; padding-left: 114px; }
.behind span { display: block; width: 860px; height: 9px; background: #fff; border: 3px solid #c9c9c9; border-bottom: 0; }
```
FILE: script.js
```js
// Rulers: 6.4375 px per millimetre, one tick every 2 mm, one label every 20 mm.
const NS = "http://www.w3.org/2000/svg";
const MM = 6.4375;

function add(parent, name, attrs, text) {
  const el = document.createElementNS(NS, name);
  for (const key in attrs) el.setAttribute(key, attrs[key]);
  if (text !== undefined) el.textContent = text;
  parent.appendChild(el);
}

function tickLength(mm) {
  if (mm % 20 === 0) return 49;
  return mm % 10 === 0 ? 17 : 10;
}

const h = document.getElementById("hruler");
for (let mm = -54; mm <= 350; mm += 2) {
  const x = Math.round(396.5 + mm * MM);
  if (x < 49) continue;
  const len = tickLength(mm);
  add(h, "rect", { x: x, y: 49 - len, width: 1, height: len, fill: "#444" });
  if (mm % 20 === 0) add(h, "text", { x: x + 5, y: 29 }, mm);
}
add(h, "rect", { x: 1868, y: 0, width: 1, height: 49, fill: "#f00" });

const v = document.getElementById("vruler");
for (let mm = -46; mm <= 256; mm += 2) {
  const y = Math.round(299.5 + mm * MM);
  if (y < 0) continue;
  const len = tickLength(mm);
  add(v, "rect", { x: 49 - len, y: y, width: len, height: 1, fill: "#444" });
  if (mm % 20 === 0) add(v, "text", { transform: `translate(29 ${y + 8}) rotate(-90)`, "text-anchor": "end" }, mm);
}
add(v, "rect", { x: 0, y: 1950, width: 49, height: 2, fill: "#f00" });

// Gravity stations, in map coordinates.
const stations = "665,156 727,156 649,202 766,188 799,213 852,199 897,197 913,166 938,194 976,219 968,242 1018,249 822,245 636,248 634,293 812,286 815,326 627,335 845,373 609,387 858,411 852,421 663,436 694,432 742,445 785,446 1047,400 620,455 624,503 652,542 651,572 685,591 634,600 709,627 632,640 975,514 1036,554 1070,567 1209,324 1257,324 1297,321 1335,332 1355,348 1190,357 1373,251 1359,291 1414,195 1453,191 1507,184 1536,170 1366,402 1357,466 1412,466 1441,496 1321,514 1325,543 1242,550 1295,575 1437,541 1445,570 1479,580 1520,632 626,698 866,695 902,680 1123,681 768,746 633,748 651,782 648,828 751,814 614,856 612,904 580,940 565,990 626,1032 724,904 712,950 710,1001 746,1015 833,1017 882,1032 943,1041 990,1052 1054,1046 1067,999 1031,904 984,861 995,827 1009,789 1440,708 1475,702 1394,736 1366,763 1383,850 1318,885 1256,909 1225,940 1189,967 1304,938 1316,980 1319,1029 1157,1041 1189,1055 1488,860 1537,846 1196,1094 1208,1098".split(" ").map(p => p.split(",").map(Number));

// The south-east survey is a dense, slightly irregular grid.
let seed = 7;
const rnd = () => (seed = (seed * 16807) % 2147483647) / 2147483647;
for (let y = 1093; y < 1349; y += 19) {
  const start = y < 1110 ? 1252 : y < 1160 ? 1222 : y < 1215 ? 1216 : y < 1240 ? 1234 : 1246;
  for (let x = start; x < 1540; x += 21) {
    if (rnd() < 0.06 || (x < 1340 && y > 1245 && rnd() < 0.3)) continue;
    stations.push([x + rnd() * 16 - 8, y + rnd() * 16 - 8]);
  }
}
const layer = document.getElementById("stations");
for (const [x, y] of stations) {
  add(layer, "rect", { x: x - 8.5, y: y - 8.5, width: 17, height: 17, rx: 1, fill: "#fff" });
  add(layer, "rect", { x: x - 5.5, y: y - 5.5, width: 11, height: 11, fill: "#000" });
}
```
